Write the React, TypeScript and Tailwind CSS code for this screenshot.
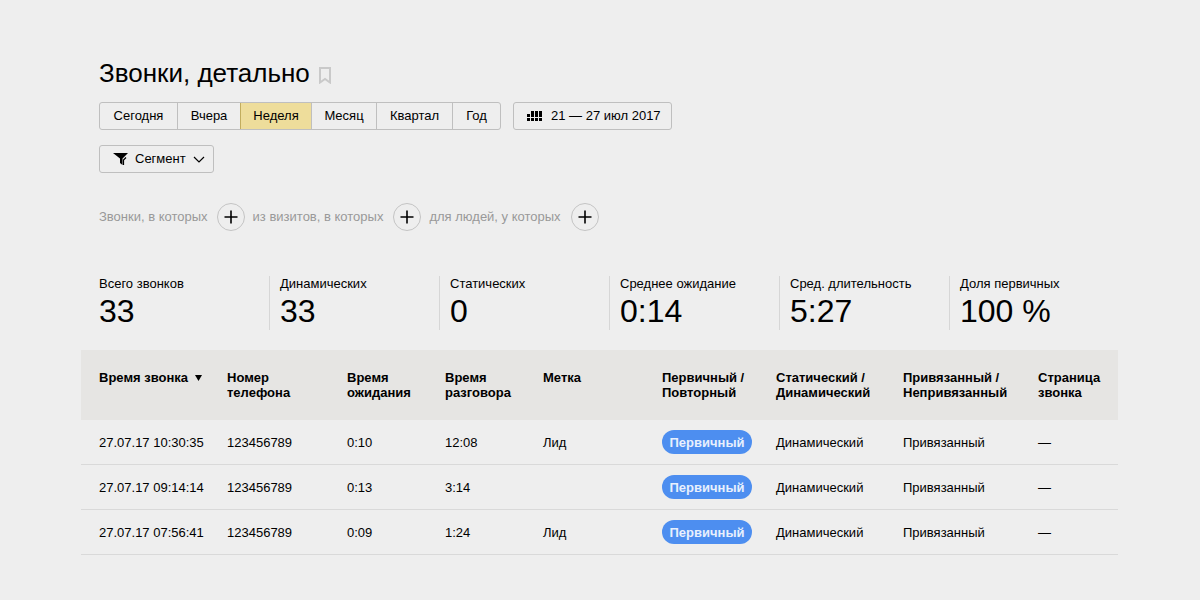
const ranges = ["Сегодня", "Вчера", "Неделя", "Месяц", "Квартал", "Год"]
const rangeWidths = ["w-[77px]", "w-[63px]", "w-[71px]", "w-[65px]", "w-[76px]", "w-[48px]"]

const stats = [
  { label: "Всего звонков", value: "33" },
  { label: "Динамических", value: "33" },
  { label: "Статических", value: "0" },
  { label: "Среднее ожидание", value: "0:14" },
  { label: "Сред. длительность", value: "5:27" },
  { label: "Доля первичных", value: "100 %" },
]

const rows = [
  { time: "27.07.17 10:30:35", wait: "0:10", talk: "12:08", tag: "Лид" },
  { time: "27.07.17 09:14:14", wait: "0:13", talk: "3:14", tag: "" },
  { time: "27.07.17 07:56:41", wait: "0:09", talk: "1:24", tag: "Лид" },
]

const cols = "grid grid-cols-[128px_120px_98px_98px_119px_114px_127px_135px_62px] pl-[18px]"

function Plus() {
  return (
    <span className="flex h-[28px] w-[28px] shrink-0 items-center justify-center rounded-full border border-[#c4c4c4]">
      <svg width="14" height="14" viewBox="0 0 14 14">
        <path d="M7 0.5v13M0.5 7h13" stroke="#000" strokeWidth="1.6" />
      </svg>
    </span>
  )
}

function Dots() {
  const dots = [
    [6, 0], [10, 0], [14, 0], [0, 4], [4, 4], [8, 4], [12, 4], [0, 8], [4, 8], [8, 8], [12, 8],
  ]
  return (
    <svg width="16" height="12" viewBox="0 0 16 12" className="shrink-0">
      <rect x="5" y="1" width="3" height="3" fill="#000" />
      <rect x="9" y="1" width="3" height="3" fill="#000" />
      <rect x="13" y="1" width="3" height="3" fill="#000" />
      {dots.slice(3).map(([x, y]) => (
        <rect key={`${x}-${y}`} x={x + (x % 4 === 0 ? 1 : 0)} y={y + 1 - 1} width="3" height="3" fill="#000" />
      ))}
    </svg>
  )
}

export default function App() {
  return (
    <div className="h-[600px] w-[1200px] overflow-hidden bg-[#eeeeee] pt-[56px] font-['Liberation_Sans',Arial,sans-serif] text-black">
      <div className="pl-[99px]">
        <div className="flex h-[34px] items-center gap-[9px]">
          <h1 className="text-[26px] leading-[34px]">Звонки, детально</h1>
          <svg width="12" height="17" viewBox="0 0 12 17" className="mt-[4px]">
            <path d="M1 1h10v14.5L6 12l-5 3.5z" fill="none" stroke="#c9c9c9" strokeWidth="2" />
          </svg>
        </div>

        <div className="mt-[12px] flex gap-[12px]">
          <div className="flex h-[28px] overflow-hidden rounded-[3px] border border-[#bfbfbf] text-[13px]">
            {ranges.map((r, i) => (
              <div
                key={r}
                className={`flex items-center justify-center ${rangeWidths[i]} ${i > 0 ? "border-l" : ""} ${
                  r === "Неделя" ? "border-[#c2ad5e] bg-[#eedd9b]" : "border-[#bfbfbf]"
                }`}
              >
                {r}
              </div>
            ))}
          </div>
          <div className="flex h-[28px] w-[159px] items-center gap-[9px] rounded-[3px] border border-[#bfbfbf] pl-[12px] text-[13px]">
            <Dots />
            <span>21 — 27 июл 2017</span>
          </div>
        </div>

        <div className="mt-[15px] flex h-[28px] w-[115px] items-center rounded-[3px] border border-[#bfbfbf] pl-[13px] text-[13px]">
          <svg width="15" height="12" viewBox="0 0 15 12" className="shrink-0">
            <path d="M0 0h15L9.5 5.5V12L7 10V5.5z" fill="#000" />
            <path d="M10.5 12V7L13 4.5" fill="none" stroke="#000" strokeWidth="1.2" />
          </svg>
          <span className="ml-[7px]">Сегмент</span>
          <svg width="12" height="7" viewBox="0 0 12 7" className="ml-[7px]">
            <path d="M1 1l5 5 5-5" fill="none" stroke="#000" strokeWidth="1.2" />
          </svg>
        </div>

        <div className="mt-[30px] flex h-[28px] items-center text-[13px] text-[#999999]">
          <span>Звонки, в которых</span>
          <span className="ml-[9px]"><Plus /></span>
          <span className="ml-[8px]">из визитов, в которых</span>
          <span className="ml-[10px]"><Plus /></span>
          <span className="ml-[8px]">для людей, у которых</span>
          <span className="ml-[10px]"><Plus /></span>
        </div>

        <div className="mt-[45px] flex h-[54px]">
          {stats.map((s, i) => (
            <div
              key={s.label}
              className={`w-[170px] ${i > 0 ? "-ml-[0px] border-l border-[#d6d6d6] pl-[10px]" : "w-[169px]"}`}
            >
              <div className="text-[13px] leading-[15px]">{s.label}</div>
              <div className="mt-[2px] text-[32px] leading-[36px]">{s.value}</div>
            </div>
          ))}
        </div>
      </div>

      <div className="ml-[81px] mt-[20px] w-[1037px] text-[13px] leading-[15px]">
        <div className={`${cols} h-[70px] items-start bg-[#e6e5e3] pt-[20px] font-bold`}>
          <div className="flex items-center gap-[7px]">
            Время звонка
            <svg width="7" height="6" viewBox="0 0 7 6">
              <path d="M0 0h7L3.5 6z" fill="#000" />
            </svg>
          </div>
          <div>Номер<br />телефона</div>
          <div>Время<br />ожидания</div>
          <div>Время<br />разговора</div>
          <div>Метка</div>
          <div>Первичный /<br />Повторный</div>
          <div>Статический /<br />Динамический</div>
          <div>Привязанный /<br />Непривязанный</div>
          <div>Страница<br />звонка</div>
        </div>
        {rows.map((r) => (
          <div key={r.time} className={`${cols} h-[45px] items-center border-b border-[#d9d9d9]`}>
            <div>{r.time}</div>
            <div>123456789</div>
            <div>{r.wait}</div>
            <div>{r.talk}</div>
            <div>{r.tag}</div>
            <div>
              <span className="flex h-[24px] w-[90px] items-center justify-center rounded-full bg-[#4d8ef0] font-bold text-[#e8f0fd]">
                Первичный
              </span>
            </div>
            <div>Динамический</div>
            <div>Привязанный</div>
            <div>—</div>
          </div>
        ))}
      </div>
    </div>
  )
}
